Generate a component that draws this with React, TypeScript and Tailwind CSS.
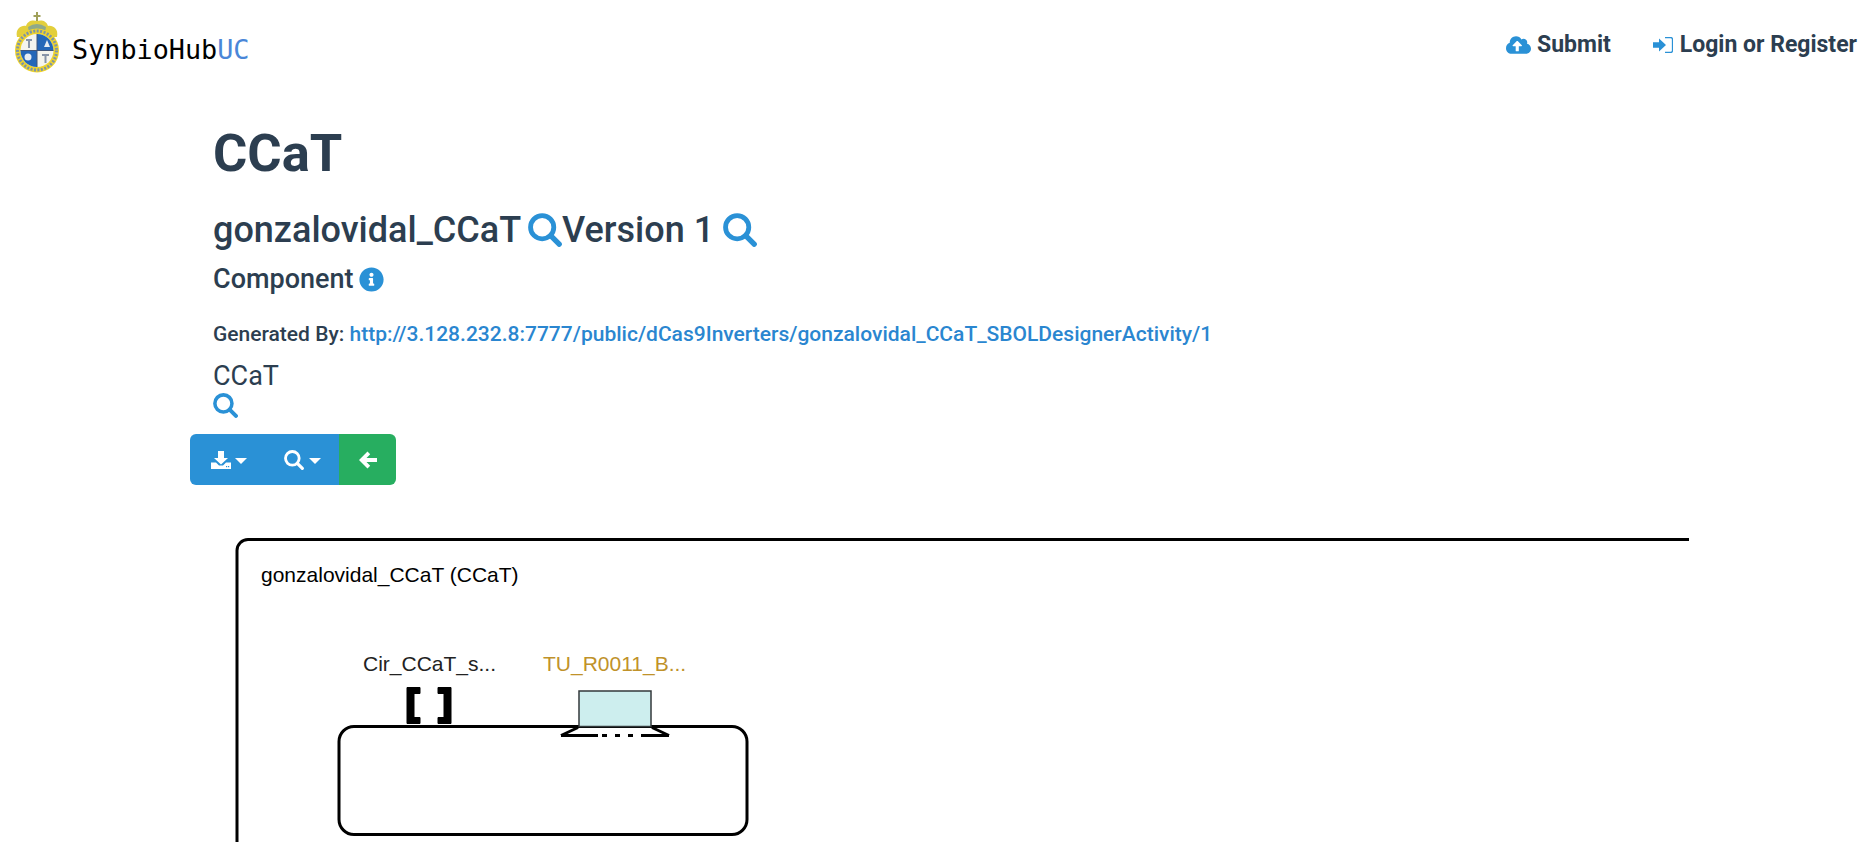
import { FaCloudUploadAlt, FaInfoCircle } from "react-icons/fa";

const SearchIcon = ({ className }: { className?: string }) => (
  <svg viewBox="0 0 24 24" className={className} fill="none" stroke="currentColor">
    <circle cx="10" cy="10" r="8.200" strokeWidth="3.400" />
    <path d="M16 16 22 22" strokeWidth="3.800" strokeLinecap="round" />
  </svg>
);

const SignInIcon = () => (
  <svg viewBox="0 0 20 16" className="w-[20px] h-[16px] text-[#2a91d6]" fill="currentColor">
    <path d="M0 5.2h6V1.6L13 8l-7 6.4v-3.6H0z" />
    <path d="M12 .5h5.5A2 2 0 0 1 19.5 2.5v11a2 2 0 0 1-2 2H12" fill="none" stroke="currentColor" strokeWidth="1.3" />
  </svg>
);

const DownloadIcon = () => (
  <svg viewBox="0 0 20 18" className="w-[20px] h-[18px]" fill="currentColor">
    <path d="M7 0h6v7h4l-7 6.5L3 7h4z" />
    <path d="M0 11.5h5l3 3h4l3-3h5V18H0z" />
    <rect x="15" y="15" width="1.2" height="1.2" fill="#2a91d6" />
    <rect x="17" y="15" width="1.2" height="1.2" fill="#2a91d6" />
  </svg>
);

const ArrowLeftIcon = () => (
  <svg viewBox="0 0 18 18" className="w-[18px] h-[18px]" fill="currentColor">
    <path d="M0 9 8.500.500l2.700 2.700L7.500 7H18v4H7.500l3.700 3.800-2.700 2.700z" />
  </svg>
);

const Caret = () => (
  <svg viewBox="0 0 12 6" className="w-[12px] h-[6px] mt-[2px]" fill="currentColor">
    <path d="M0 0h12L6 6z" />
  </svg>
);

const Logo = () => (
  <svg viewBox="0 0 48 62" className="w-[48px] h-[62px]">
    <path d="M23 0h2v3h2.5v2H25v4h-2V5h-2.5V3H23z" fill="#a0a05a" />
    <path d="M4 25 C2 16 9 13 13 14 C15 8 20 8 24 9 C28 8 33 8 35 14 C39 13 46 16 44 25z" fill="#e3cf3c" />
    <path d="M15 15 Q24 9 33 15 L32 20 H16z" fill="#8fa98a" />
    <circle cx="24" cy="38.500" r="22" fill="#efd42c" />
    <circle cx="24" cy="38.500" r="19.500" fill="none" stroke="#7d94a8" strokeWidth="3" strokeDasharray="2 1.500" />
    <circle cx="24" cy="38.500" r="16.500" fill="#f4f4ee" />
    <path d="M24 22v16.500h16.500A16.500 16.500 0 0 0 24 22z" fill="#2467b8" />
    <path d="M24 55V38.500H7.500A16.500 16.500 0 0 0 24 55z" fill="#2467b8" />
    <path d="M13 27h6v2h-2v7h-2v-7h-2z" fill="#8794a8" />
    <path d="M31 35l3-7 3 7z" fill="#e6edf4" />
    <circle cx="15" cy="45" r="3.500" fill="#e6edf4" />
    <path d="M29 42h7v2h-2.500v7h-2v-7H29z" fill="#8794a8" />
    <path d="M24 22v33M7.500 38.500h33" stroke="#40567a" strokeWidth="1" />
  </svg>
);

export default function App() {
  return (
    <div className="h-[842px] overflow-hidden bg-white text-[#2c3e50] font-['Roboto',sans-serif]">
      {/* navbar */}
      <header className="flex items-start justify-between h-[90px]">
        <div className="flex items-center pl-[13px] pt-[12px]">
          <Logo />
          <div className="ml-[11px] mt-[15px] text-[26.8px] leading-none text-black font-['DejaVu_Sans_Mono',monospace]">
            SynbioHub<span className="text-[#4a86d8]">UC</span>
          </div>
        </div>
        <nav className="flex items-center pt-[31px] pr-[7px] text-[23px] leading-[28px] font-bold">
          <a className="flex items-center gap-[6px]">
            <FaCloudUploadAlt className="w-[25px] h-[20px] text-[#2a91d6]" />
            Submit
          </a>
          <a className="flex items-center gap-[7px] ml-[42px]">
            <SignInIcon />
            Login or Register
          </a>
        </nav>
      </header>

      <main className="pl-[190px]">
        <div className="pl-[23px]">
          <h1 className="text-[52.500px] leading-[62px] font-bold mt-[32px]">CCaT</h1>
          <h2 className="flex items-center text-[36px] leading-[46px] font-medium mt-[23px]">
            gonzalovidal_CCaT
            <SearchIcon className="w-[34px] h-[34px] ml-[7px] text-[#2a91d6]" />
            Version 1
            <SearchIcon className="w-[34px] h-[34px] ml-[9px] text-[#2a91d6]" />
          </h2>
          <div className="flex items-center text-[27px] leading-[34px] font-medium mt-[9px]">
            Component
            <FaInfoCircle className="w-[25px] h-[25px] ml-[6px] text-[#2a91d6]" />
          </div>
          <p className="text-[21px] leading-[28px] font-medium mt-[24px]">
            Generated By:{" "}
            <a className="text-[#2a86d0]">http://3.128.232.8:7777/public/dCas9Inverters/gonzalovidal_CCaT_SBOLDesignerActivity/1</a>
          </p>
          <p className="text-[27px] leading-[32px] mt-[12px]">CCaT</p>
          <SearchIcon className="w-[25px] h-[25px] mt-[1px] text-[#2a91d6]" />
        </div>

        <div className="flex w-[206px] h-[51px] mt-[16px] text-white">
          <button className="flex items-center justify-center gap-[4px] w-[78px] bg-[#2a91d6] rounded-l-[6px]">
            <DownloadIcon />
            <Caret />
          </button>
          <button className="flex items-center justify-center gap-[5px] w-[71px] pr-[3px] bg-[#2a91d6]">
            <SearchIcon className="w-[20px] h-[20px]" />
            <Caret />
          </button>
          <button className="flex items-center justify-center w-[57px] bg-[#27ae60] rounded-r-[6px]">
            <ArrowLeftIcon />
          </button>
        </div>

        {/* design diagram */}
        <svg width="1500" height="320" viewBox="0 0 1500 320" className="block mt-[51px] font-['Liberation_Sans',sans-serif]">
          <path d="M1499 3.500H58A11 11 0 0 0 47 14.500V320" fill="none" stroke="#000" strokeWidth="3" />
          <text x="71" y="46" fontSize="21" fill="#000">gonzalovidal_CCaT (CCaT)</text>
          <text x="173" y="135" fontSize="21" fill="#222">Cir_CCaT_s...</text>
          <text x="353" y="135" fontSize="21" fill="#c0922a">TU_R0011_B...</text>

          <rect x="149" y="190.500" width="408" height="108" rx="15" fill="none" stroke="#000" strokeWidth="3" />

          <path d="M217 151.500h13v6h-6v24h6v6h-13zM261 151.500h-13v6h6v24h-6v6h13z" fill="#000" stroke="#000" strokeWidth="1" />

          <path d="M371 199.500 l17 -8 M479 199.500 l-17 -8" stroke="#000" strokeWidth="3" />
          <path d="M371 199.500H479" fill="none" stroke="#000" strokeWidth="3" strokeDasharray="37 4 5 8 5 8 5 8 36" />
          <rect x="389" y="155" width="72" height="35.500" fill="#cdeeee" stroke="#33393b" strokeWidth="1.500" />
        </svg>
      </main>
    </div>
  );
}
